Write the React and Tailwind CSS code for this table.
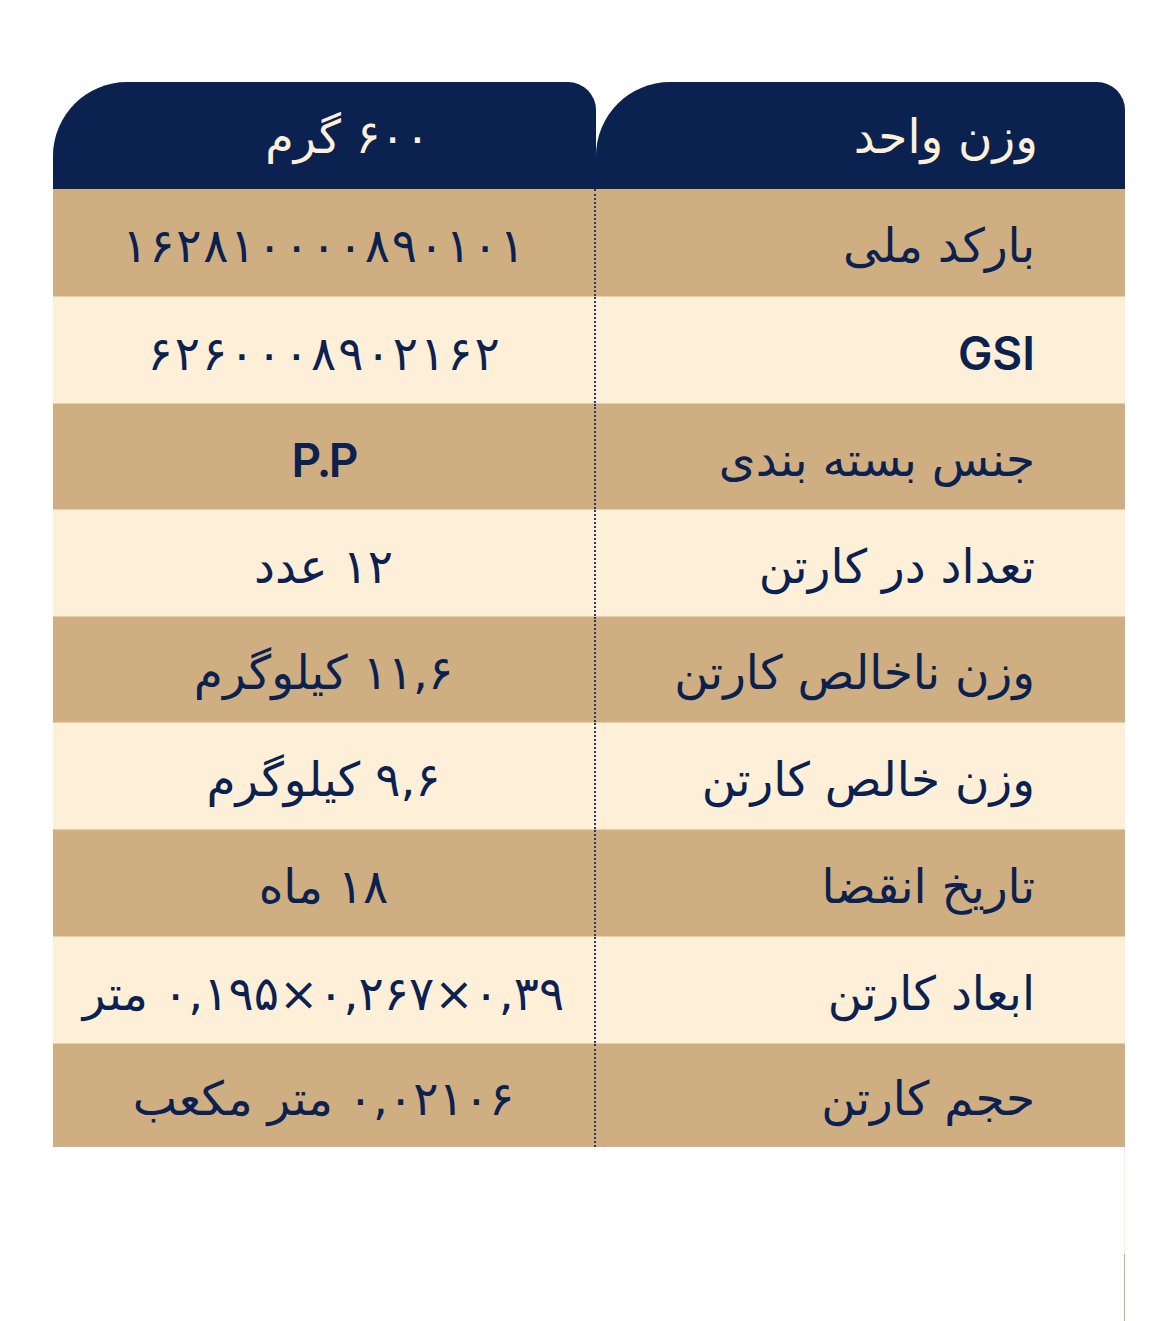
import React from "react";

const rows = [
  { label: "بارکد ملی", value: "۱۶۲۸۱۰۰۰۰۸۹۰۱۰۱", h: "h-[107px]", bg: "bg-[#cfae81]", split: "gap-[1.7px]" },
  { label: "GSI", value: "۶۲۶۰۰۰۸۹۰۲۱۶۲", h: "h-[107px]", bg: "bg-[#fef0d8]", latinLabel: true, split: "gap-[2px]" },
  { label: "جنس بسته بندی", value: "P.P", h: "h-[106px]", bg: "bg-[#cfae81]", latinValue: true },
  { label: "تعداد در کارتن", value: "۱۲ عدد", h: "h-[107px]", bg: "bg-[#fef0d8]" },
  { label: "وزن ناخالص کارتن", value: "۱۱,۶ کیلوگرم", h: "h-[106px]", bg: "bg-[#cfae81]" },
  { label: "وزن خالص کارتن", value: "۹,۶ کیلوگرم", h: "h-[107px]", bg: "bg-[#fef0d8]" },
  { label: "تاریخ انقضا", value: "۱۸ ماه", h: "h-[107px]", bg: "bg-[#cfae81]" },
  { label: "ابعاد کارتن", value: "۰,۳۹×۰,۲۶۷×۰,۱۹۵ متر", h: "h-[107px]", bg: "bg-[#fef0d8]" },
  { label: "حجم کارتن", value: "۰,۰۲۱۰۶ متر مکعب", h: "h-[104px]", bg: "bg-[#cfae81]" },
];

const fa = { fontFamily: '"DejaVu Sans", "Noto Sans", sans-serif' };
const la = { fontFamily: 'Inter, "Liberation Sans", sans-serif' };

export default function App() {
  return (
    <div className="w-[1165px] h-[1321px] bg-white pt-[82px] pl-[53px]">
      <div className="w-[1072px]">
        {/* header */}
        <div className="flex h-[107px]">
          <div className="w-[543px] h-full bg-[#0b2150] rounded-tl-[74px] rounded-tr-[28px] flex items-center justify-center pl-[46px]">
            <span dir="rtl" className="text-[46px] text-[#fef0d8] leading-none pt-[2px] whitespace-nowrap" style={fa}>
              ۶۰۰ گرم
            </span>
          </div>
          <div className="flex-1 h-full bg-[#0b2150] rounded-tl-[74px] rounded-tr-[28px] flex items-center justify-end pr-[87px]">
            <span dir="rtl" className="text-[47px] text-[#fef0d8] leading-none pt-[2px]" style={fa}>
              وزن واحد
            </span>
          </div>
        </div>
        {/* body */}
        <div className="flex flex-col">
          {rows.map((r, i) => (
            <div key={i} className={`flex ${r.h} ${r.bg} border-t border-[#e6cfa8] first:border-t-0`}>
              <div className="w-[541px] h-full flex items-center justify-center pt-[6px]">
                {r.split ? (
                  <span
                    dir="ltr"
                    className={`flex ${r.split} text-[47px] text-[#0b2150] leading-none`}
                    style={fa}
                  >
                    {Array.from(r.value).map((c, j) => (
                      <span key={j}>{c}</span>
                    ))}
                  </span>
                ) : (
                  <span
                    dir="rtl"
                    className={`text-[#0b2150] leading-none whitespace-nowrap ${r.latinValue ? "text-[46px] font-semibold tracking-[-0.06em]" : "text-[47px]"}`}
                    style={r.latinValue ? la : fa}
                  >
                    {r.value}
                  </span>
                )}
              </div>
              <div className="w-[2px] h-full border-l-2 border-dotted border-[#2a3a66]" />
              <div className="flex-1 h-full flex items-center justify-end pr-[90px] pt-[6px]">
                <span
                  dir="rtl"
                  className={`text-[#0b2150] leading-none whitespace-nowrap ${r.latinLabel ? "text-[46px] font-semibold" : "text-[47px]"}`}
                  style={r.latinLabel ? la : fa}
                >
                  {r.label}
                </span>
              </div>
            </div>
          ))}
        </div>
        <div className="ml-[1071px] w-px">
          <div className="h-[107px] bg-[#fef0d8]" />
          <div className="h-[67px] bg-[#cfae81]" />
        </div>
      </div>
    </div>
  );
}
